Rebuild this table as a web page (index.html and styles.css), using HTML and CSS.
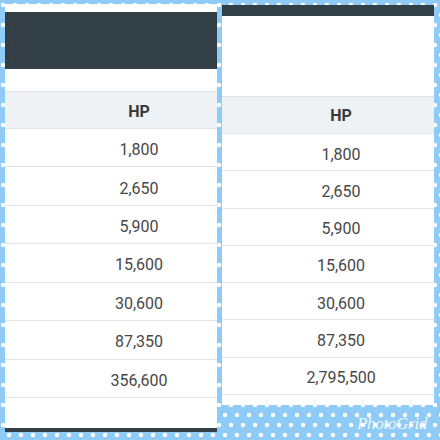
FILE: index.html
```html
<!DOCTYPE html>
<html>
<head>
<meta charset="utf-8">
<link rel="stylesheet" href="styles.css">
</head>
<body>
<div class="collage">
  <section class="panel panel-left">
    <div class="top-strip"></div>
    <div class="appbar"><span class="kebab"><i></i><i></i><i></i></span></div>
    <div class="spacer"></div>
    <div class="table">
      <div class="cell head">HP</div>
      <div class="cell">1,800</div>
      <div class="cell">2,650</div>
      <div class="cell">5,900</div>
      <div class="cell">15,600</div>
      <div class="cell">30,600</div>
      <div class="cell">87,350</div>
      <div class="cell">356,600</div>
    </div>
    <div class="foot"></div>
    <div class="bottom-bar"></div>
  </section>
  <section class="panel panel-right">
    <div class="top-bar"></div>
    <div class="spacer"></div>
    <div class="table">
      <div class="cell head">HP</div>
      <div class="cell">1,800</div>
      <div class="cell">2,650</div>
      <div class="cell">5,900</div>
      <div class="cell">15,600</div>
      <div class="cell">30,600</div>
      <div class="cell">87,350</div>
      <div class="cell">2,795,500</div>
    </div>
    <div class="foot"></div>
  </section>
  <span class="watermark">PhotoGrid</span>
</div>
</body>
</html>
```

FILE: styles.css
```css
html, body {
  margin: 0;
  padding: 0;
}

.collage {
  position: relative;
  width: 440px;
  height: 440px;
  box-sizing: border-box;
  padding: 4px 6px 0 5px;
  display: flex;
  align-items: flex-start;
  gap: 5px;
  background-color: #8fcbf7;
  background-image:
    radial-gradient(circle at 3px 5px, #ffffff 1.9px, rgba(255,255,255,0) 2.6px),
    radial-gradient(circle at 9px 15px, #ffffff 1.9px, rgba(255,255,255,0) 2.6px);
  background-size: 12px 20px;
  font-family: Roboto, "Noto Sans", sans-serif;
  overflow: hidden;
}

.panel {
  width: 212px;
  background: #ffffff;
  display: flex;
  flex-direction: column;
  flex: none;
}

.panel-left {
  height: 428px;
}

.panel-right {
  height: 400px;
  margin-top: 1px;
}

.top-strip {
  height: 8px;
  background: #ffffff;
}

.appbar {
  height: 57px;
  background: #323f47;
  display: flex;
  align-items: center;
  padding-left: 5px;
}

.kebab {
  display: flex;
  flex-direction: column;
  gap: 12px;
}

.kebab i {
  display: block;
  width: 4px;
  height: 4px;
  border-radius: 50%;
  background: #4a3f3b;
}

.top-bar {
  height: 11px;
  background: #323f47;
}

.panel-left .spacer {
  height: 22px;
}

.panel-right .spacer {
  height: 80px;
}

.table {
  display: flex;
  flex-direction: column;
}

.cell {
  box-sizing: border-box;
  display: flex;
  align-items: center;
  justify-content: center;
  font-size: 16px;
  color: #474747;
  border-bottom: 1px solid #e2e4e6;
  padding-top: 4px;
}

.panel-left .cell {
  height: 38.43px;
  padding-left: 56px;
}

.panel-right .cell {
  height: 37.3px;
  padding-left: 26px;
}

.cell.head {
  font-weight: 700;
  color: #383b3e;
  background: #eff2f5;
  border-top: 1px solid #dfe2e5;
  padding-top: 2px;
}

.panel-left .cell.head,
.panel-right .cell.head {
  height: 38px;
}

.panel-left .foot {
  height: 30px;
}

.panel-right .foot {
  height: 10px;
}

.bottom-bar {
  height: 4px;
  background: #323f47;
}

.watermark {
  position: absolute;
  left: 357px;
  top: 414px;
  font-family: "Liberation Serif", serif;
  font-style: italic;
  font-size: 17px;
  color: rgba(255, 255, 255, 0.85);
  letter-spacing: -0.3px;
}
```
